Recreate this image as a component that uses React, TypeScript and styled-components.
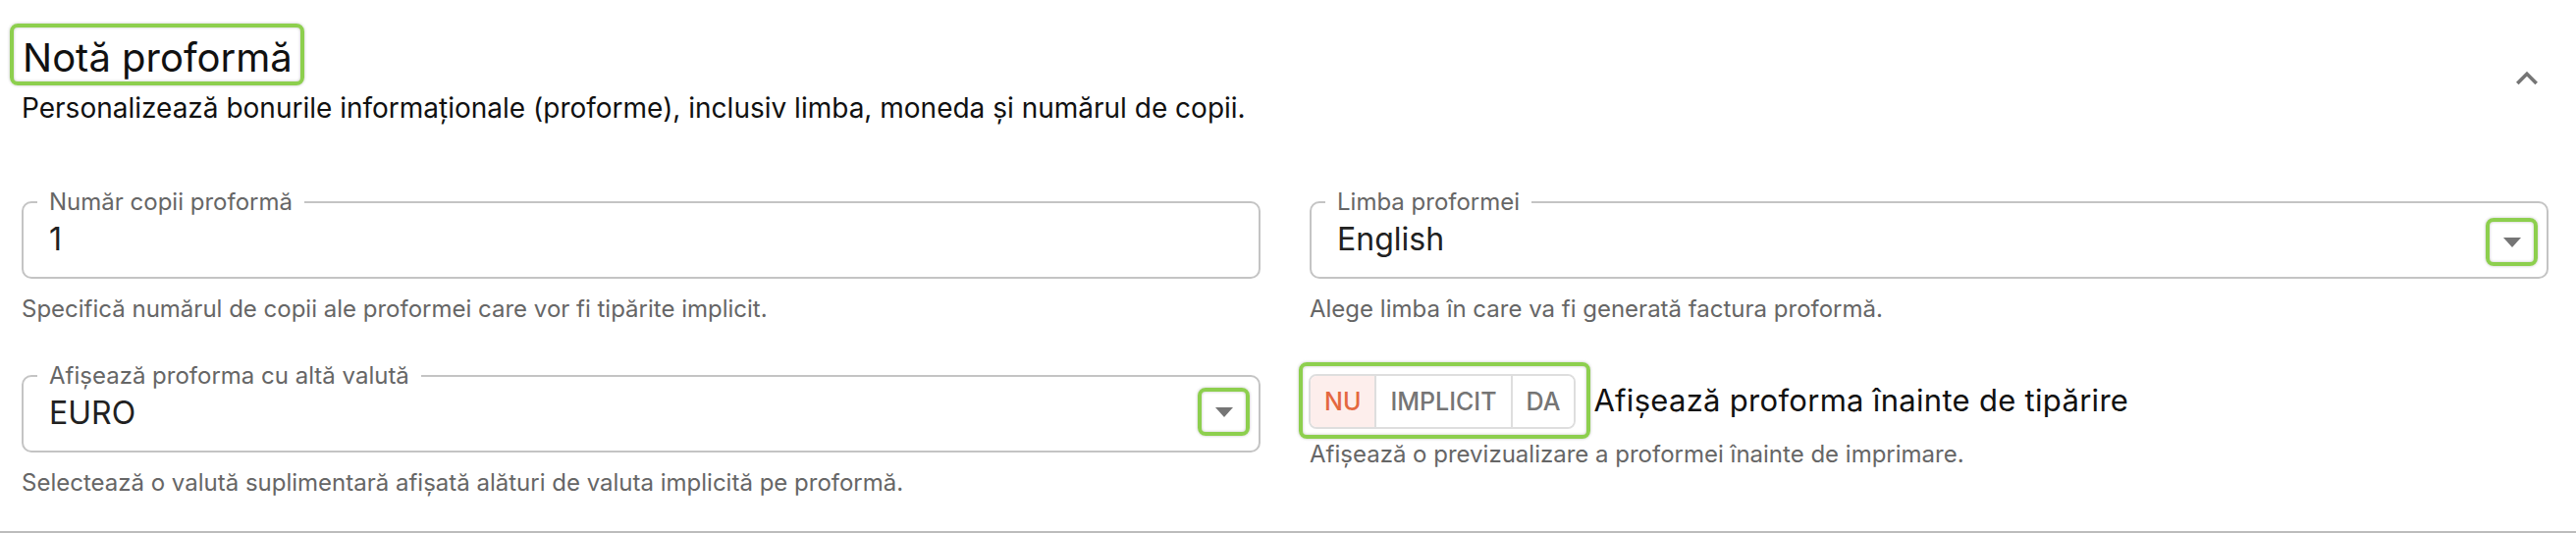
import styled, { createGlobalStyle } from 'styled-components'

const GlobalStyle = createGlobalStyle`
  html, body {
    margin: 0;
    padding: 0;
    background: #ffffff;
  }
  body {
    font-family: Inter, "Noto Sans", "Liberation Sans", sans-serif;
    color: #111111;
  }
  * {
    box-sizing: border-box;
  }
`;

const HIGHLIGHT = '#8dcf4e';

const Section = styled.section`
  width: 2624px;
  height: 543px;
  padding: 24px 28px 0 22px;
  border-bottom: 2px solid #bcbcbc;
  display: flex;
  flex-direction: column;
`;

const Header = styled.div`
  display: flex;
  justify-content: space-between;
  align-items: center;
`;

const TitleBlock = styled.div`
  display: flex;
  flex-direction: column;
  align-items: flex-start;
`;

const TitleBox = styled.div`
  margin-left: -12px;
  padding: 7px 8px 0 9px;
  border: 4px solid ${HIGHLIGHT};
  border-radius: 8px;
  box-shadow: 0 0 3px rgba(0, 0, 0, 0.25), inset 0 0 3px rgba(0, 0, 0, 0.25);
`;

const Title = styled.h2`
  margin: 0;
  font-size: 40px;
  line-height: 48px;
  font-weight: 400;
  color: #111111;
`;

const Subtitle = styled.p`
  margin: 3px 0 0 0;
  font-size: 28px;
  line-height: 40px;
  color: #111111;
`;

const CollapseButton = styled.button`
  margin-top: 6px;
  width: 44px;
  height: 44px;
  padding: 0;
  border: none;
  background: transparent;
  color: #757575;
  display: flex;
  align-items: center;
  justify-content: center;
  cursor: pointer;
`;

const Grid = styled.div`
  margin-top: 62px;
  display: grid;
  grid-template-columns: 1fr 1fr;
  column-gap: 50px;
  row-gap: 38px;
`;

const FieldGroup = styled.div`
  display: flex;
  flex-direction: column;
  min-width: 0;
`;

const Outline = styled.fieldset<{ $select?: boolean }>`
  margin: 0;
  min-width: 0;
  padding: 0 ${p => (p.$select ? '9px' : '14px')} 20px 14px;
  border: 2px solid #c4c4c4;
  border-radius: 10px;
`;

const Legend = styled.legend`
  padding: 0 12px;
  font-size: 24px;
  line-height: 28px;
  color: #666666;
`;

const ValueRow = styled.div`
  margin-top: 6px;
  height: 36px;
  padding-left: 12px;
  display: flex;
  align-items: center;
  justify-content: space-between;
`;

const Value = styled.span`
  font-size: 32px;
  line-height: 36px;
  color: #212121;
`;

const ArrowBox = styled.div<{ $offset: number }>`
  flex: none;
  width: 53px;
  height: 49px;
  margin-top: ${p => p.$offset}px;
  border: 4px solid ${HIGHLIGHT};
  border-radius: 8px;
  box-shadow: 0 0 3px rgba(0, 0, 0, 0.25), inset 0 0 3px rgba(0, 0, 0, 0.25);
  display: flex;
  align-items: center;
  justify-content: center;
`;

const Triangle = styled.span`
  width: 0;
  height: 0;
  border-left: 9px solid transparent;
  border-right: 9px solid transparent;
  border-top: 10px solid #757575;
`;

const Helper = styled.p<{ $gap?: number }>`
  margin: ${p => p.$gap ?? 15}px 0 0 0;
  font-size: 24px;
  line-height: 32px;
  color: #666666;
`;

const ToggleRow = styled.div`
  display: flex;
  align-items: center;
`;

const ToggleHighlight = styled.div`
  margin-left: -11px;
  padding: 8px 11px 6px 6px;
  border: 4px solid ${HIGHLIGHT};
  border-radius: 8px;
  box-shadow: 0 0 3px rgba(0, 0, 0, 0.25), inset 0 0 3px rgba(0, 0, 0, 0.25);
`;

const ButtonGroup = styled.div`
  display: flex;
  height: 56px;
  border: 2px solid #dedede;
  border-radius: 8px;
  overflow: hidden;
`;

const ToggleButton = styled.button<{ $active?: boolean }>`
  height: 100%;
  padding: 0 14px;
  border: none;
  border-left: 2px solid #dedede;
  background: ${p => (p.$active ? '#fdeeec' : '#ffffff')};
  color: ${p => (p.$active ? '#e4683f' : '#757575')};
  font-family: inherit;
  font-size: 25px;
  font-weight: 500;
  cursor: pointer;

  &:first-child {
    border-left: none;
  }
`;

const ToggleLabel = styled.span`
  margin-left: 3px;
  font-size: 31px;
  line-height: 36px;
  letter-spacing: 0.3px;
  color: #111111;
`;

const ChevronUp = () => (
  <svg width="44" height="44" viewBox="0 0 24 24" fill="currentColor">
    <path d="M12 8l-6 6 1.41 1.41L12 10.83l4.59 4.58L18 14z" />
  </svg>
)

const TextField = ({ label, value, helper }: { label: string; value: string; helper: string }) => (
  <FieldGroup>
    <Outline>
      <Legend>{label}</Legend>
      <ValueRow>
        <Value>{value}</Value>
      </ValueRow>
    </Outline>
    <Helper>{helper}</Helper>
  </FieldGroup>
)

const SelectField = ({ label, value, helper, offset }:
  { label: string; value: string; helper: string; offset: number }) => (
  <FieldGroup>
    <Outline $select>
      <Legend>{label}</Legend>
      <ValueRow>
        <Value>{value}</Value>
        <ArrowBox $offset={offset}>
          <Triangle />
        </ArrowBox>
      </ValueRow>
    </Outline>
    <Helper>{helper}</Helper>
  </FieldGroup>
)

const options = ['NU', 'IMPLICIT', 'DA']

export default function App() {
  return (
    <>
      <GlobalStyle />
      <Section>
        <Header>
          <TitleBlock>
            <TitleBox>
              <Title>Notă proformă</Title>
            </TitleBox>
            <Subtitle>
              Personalizează bonurile informaționale (proforme), inclusiv limba, moneda și numărul de copii.
            </Subtitle>
          </TitleBlock>
          <CollapseButton aria-label="Restrânge">
            <ChevronUp />
          </CollapseButton>
        </Header>

        <Grid>
          <TextField
            label="Număr copii proformă"
            value="1"
            helper="Specifică numărul de copii ale proformei care vor fi tipărite implicit."
          />
          <SelectField
            label="Limba proformei"
            value="English"
            helper="Alege limba în care va fi generată factura proformă."
            offset={5}
          />
          <SelectField
            label="Afișează proforma cu altă valută"
            value="EURO"
            helper="Selectează o valută suplimentară afișată alături de valuta implicită pe proformă."
            offset={-3}
          />
          <FieldGroup>
            <ToggleRow>
              <ToggleHighlight>
                <ButtonGroup>
                  {options.map(o => (
                    <ToggleButton key={o} $active={o === 'NU'}>{o}</ToggleButton>
                  ))}
                </ButtonGroup>
              </ToggleHighlight>
              <ToggleLabel>Afișează proforma înainte de tipărire</ToggleLabel>
            </ToggleRow>
            <Helper $gap={0}>Afișează o previzualizare a proformei înainte de imprimare.</Helper>
          </FieldGroup>
        </Grid>
      </Section>
    </>
  )
}
